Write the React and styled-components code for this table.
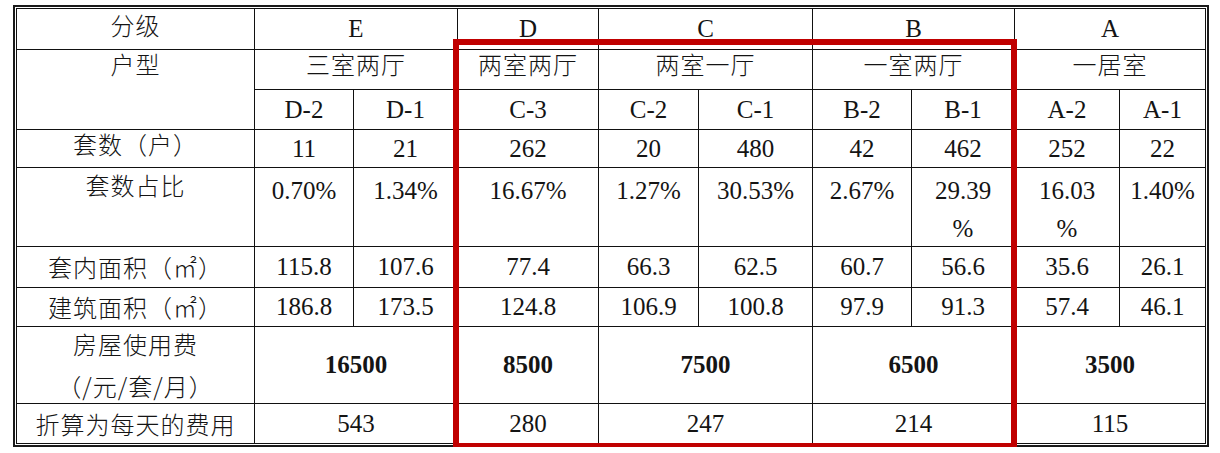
import React from "react";
import styled, { createGlobalStyle } from "styled-components";

const GlobalStyle = createGlobalStyle`
  html, body {
    margin: 0;
    padding: 0;
    background: #ffffff;
  }
`;

const Page = styled.div`
  position: relative;
  padding: 5px 0 0 13px;
`;

const Frame = styled.div`
  display: inline-block;
  border: 2px solid #1a1a1a;
  padding: 1px;
`;

const Grid = styled.div`
  display: grid;
  grid-template-columns: 238px 99px 104px 141px 100px 114px 99px 103px 105px 86px;
  grid-template-rows: 41px 40px 40px 38px 79px 41px 39px 77px 40px;
  border-left: 1px solid #111;
  border-top: 1px solid #111;
`;

const Cell = styled.div`
  grid-column: span ${(p) => p.$span || 1};
  grid-row: span ${(p) => p.$rows || 1};
  box-sizing: border-box;
  border-right: 1px solid #111;
  border-bottom: 1px solid #111;
  display: flex;
  flex-direction: column;
  align-items: center;
  justify-content: ${(p) => (p.$top ? "flex-start" : "center")};
  padding-top: ${(p) => p.$pt || 0}px;
  color: #141414;
  text-align: center;
  white-space: nowrap;
  font-family: ${(p) =>
    p.$cn
      ? '"Noto Sans CJK SC", "Noto Sans", sans-serif'
      : '"Liberation Serif", "Times New Roman", serif'};
  font-size: ${(p) => (p.$cn ? 24 : 25)}px;
  font-weight: ${(p) => (p.$bold ? 700 : p.$cn ? 300 : 400)};
  letter-spacing: ${(p) => (p.$cn ? 1 : 0)}px;
  line-height: ${(p) => p.$lh || (p.$cn ? 28 : 38)}px;
`;

const Line = styled.span`
  display: block;
`;

// red annotation drawn over the table
const Highlight = styled.div`
  position: absolute;
  left: 453px;
  top: 39px;
  width: 564px;
  height: 410px;
  box-sizing: border-box;
  border: 6px solid #c00000;
  pointer-events: none;
`;

const cn = true;

const rows = [
  [
    { t: "分级", cn, top: true, pt: 2 },
    { t: "E", span: 2 },
    { t: "D" },
    { t: "C", span: 2 },
    { t: "B", span: 2 },
    { t: "A", span: 2 },
  ],
  [
    { t: "户型", cn, rows: 2, top: true },
    { t: "三室两厅", cn, span: 2, top: true },
    { t: "两室两厅", cn, top: true },
    { t: "两室一厅", cn, span: 2, top: true },
    { t: "一室两厅", cn, span: 2, top: true },
    { t: "一居室", cn, span: 2, top: true },
  ],
  ["D-2", "D-1", "C-3", "C-2", "C-1", "B-2", "B-1", "A-2", "A-1"],
  [{ t: "套数（户）", cn, top: true }, "11", "21", "262", "20", "480", "42", "462", "252", "22"],
  [
    { t: "套数占比", cn, top: true, pt: 3 },
    ...["0.70%", "1.34%", "16.67%", "1.27%", "30.53%", "2.67%", ["29.39", "%"], ["16.03", "%"], "1.40%"].map(
      (t) => ({ t, top: true, pt: 4 })
    ),
  ],
  [{ t: "套内面积（㎡）", cn }, "115.8", "107.6", "77.4", "66.3", "62.5", "60.7", "56.6", "35.6", "26.1"],
  [{ t: "建筑面积（㎡）", cn }, "186.8", "173.5", "124.8", "106.9", "100.8", "97.9", "91.3", "57.4", "46.1"],
  [
    { t: ["房屋使用费", "（/元/套/月）"], cn, lh: 42 },
    { t: "16500", span: 2, bold: true },
    { t: "8500", bold: true },
    { t: "7500", span: 2, bold: true },
    { t: "6500", span: 2, bold: true },
    { t: "3500", span: 2, bold: true },
  ],
  [
    { t: "折算为每天的费用", cn },
    { t: "543", span: 2 },
    { t: "280" },
    { t: "247", span: 2 },
    { t: "214", span: 2 },
    { t: "115", span: 2 },
  ],
];

export default function App() {
  return (
    <>
      <GlobalStyle />
      <Page>
        <Frame>
          <Grid>
            {rows.flatMap((row, r) =>
              row.map((c, i) => {
                const cell = typeof c === "string" ? { t: c } : c;
                const lines = Array.isArray(cell.t) ? cell.t : [cell.t];
                return (
                  <Cell
                    key={r + "-" + i}
                    $span={cell.span}
                    $rows={cell.rows}
                    $cn={cell.cn}
                    $bold={cell.bold}
                    $top={cell.top}
                    $pt={cell.pt}
                    $lh={cell.lh}
                  >
                    {lines.map((l, k) => (
                      <Line key={k}>{l}</Line>
                    ))}
                  </Cell>
                );
              })
            )}
          </Grid>
        </Frame>
        <Highlight />
      </Page>
    </>
  );
}
